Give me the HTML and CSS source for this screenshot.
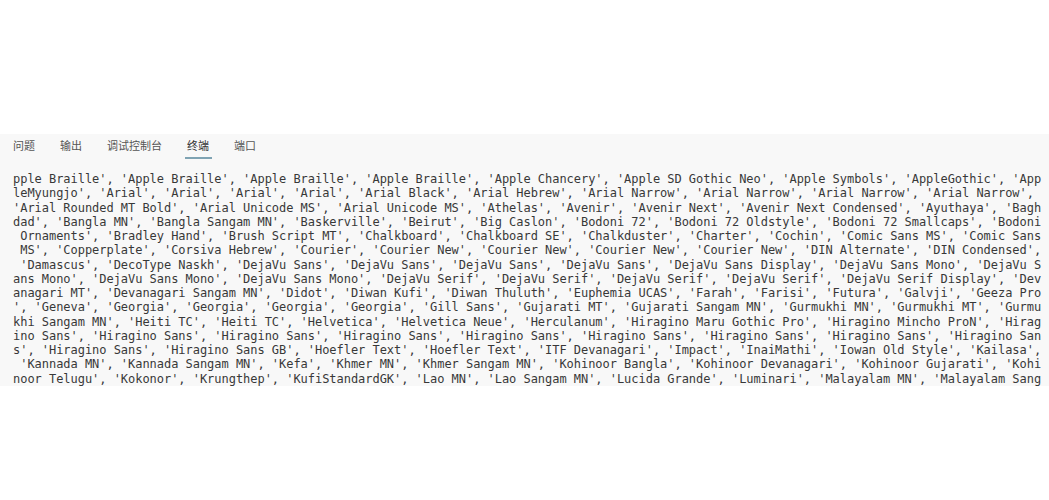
FILE: index.html
```html
<!DOCTYPE html>
<html lang="zh">
<head>
<meta charset="utf-8">
<title>终端</title>
<link rel="stylesheet" href="styles.css">
</head>
<body>
<div class="top"></div>
<section class="panel">
  <nav class="tabs">
    <span class="tab">问题</span>
    <span class="tab">输出</span>
    <span class="tab">调试控制台</span>
    <span class="tab active">终端</span>
    <span class="tab">端口</span>
  </nav>
  <div class="terminal">
<div class="line">pple Braille', 'Apple Braille', 'Apple Braille', 'Apple Braille', 'Apple Chancery', 'Apple SD Gothic Neo', 'Apple Symbols', 'AppleGothic', 'App</div>
<div class="line">leMyungjo', 'Arial', 'Arial', 'Arial', 'Arial', 'Arial Black', 'Arial Hebrew', 'Arial Narrow', 'Arial Narrow', 'Arial Narrow', 'Arial Narrow', </div>
<div class="line">'Arial Rounded MT Bold', 'Arial Unicode MS', 'Arial Unicode MS', 'Athelas', 'Avenir', 'Avenir Next', 'Avenir Next Condensed', 'Ayuthaya', 'Bagh</div>
<div class="line">dad', 'Bangla MN', 'Bangla Sangam MN', 'Baskerville', 'Beirut', 'Big Caslon', 'Bodoni 72', 'Bodoni 72 Oldstyle', 'Bodoni 72 Smallcaps', 'Bodoni</div>
<div class="line"> Ornaments', 'Bradley Hand', 'Brush Script MT', 'Chalkboard', 'Chalkboard SE', 'Chalkduster', 'Charter', 'Cochin', 'Comic Sans MS', 'Comic Sans</div>
<div class="line"> MS', 'Copperplate', 'Corsiva Hebrew', 'Courier', 'Courier New', 'Courier New', 'Courier New', 'Courier New', 'DIN Alternate', 'DIN Condensed',</div>
<div class="line"> 'Damascus', 'DecoType Naskh', 'DejaVu Sans', 'DejaVu Sans', 'DejaVu Sans', 'DejaVu Sans', 'DejaVu Sans Display', 'DejaVu Sans Mono', 'DejaVu S</div>
<div class="line">ans Mono', 'DejaVu Sans Mono', 'DejaVu Sans Mono', 'DejaVu Serif', 'DejaVu Serif', 'DejaVu Serif', 'DejaVu Serif', 'DejaVu Serif Display', 'Dev</div>
<div class="line">anagari MT', 'Devanagari Sangam MN', 'Didot', 'Diwan Kufi', 'Diwan Thuluth', 'Euphemia UCAS', 'Farah', 'Farisi', 'Futura', 'Galvji', 'Geeza Pro</div>
<div class="line">', 'Geneva', 'Georgia', 'Georgia', 'Georgia', 'Georgia', 'Gill Sans', 'Gujarati MT', 'Gujarati Sangam MN', 'Gurmukhi MN', 'Gurmukhi MT', 'Gurmu</div>
<div class="line">khi Sangam MN', 'Heiti TC', 'Heiti TC', 'Helvetica', 'Helvetica Neue', 'Herculanum', 'Hiragino Maru Gothic Pro', 'Hiragino Mincho ProN', 'Hirag</div>
<div class="line">ino Sans', 'Hiragino Sans', 'Hiragino Sans', 'Hiragino Sans', 'Hiragino Sans', 'Hiragino Sans', 'Hiragino Sans', 'Hiragino Sans', 'Hiragino San</div>
<div class="line">s', 'Hiragino Sans', 'Hiragino Sans GB', 'Hoefler Text', 'Hoefler Text', 'ITF Devanagari', 'Impact', 'InaiMathi', 'Iowan Old Style', 'Kailasa',</div>
<div class="line"> 'Kannada MN', 'Kannada Sangam MN', 'Kefa', 'Khmer MN', 'Khmer Sangam MN', 'Kohinoor Bangla', 'Kohinoor Devanagari', 'Kohinoor Gujarati', 'Kohi</div>
<div class="line">noor Telugu', 'Kokonor', 'Krungthep', 'KufiStandardGK', 'Lao MN', 'Lao Sangam MN', 'Lucida Grande', 'Luminari', 'Malayalam MN', 'Malayalam Sang</div>
  </div>
</section>
</body>
</html>
```

FILE: styles.css
```css
html, body {
  margin: 0;
  padding: 0;
  background: #ffffff;
}

.top {
  height: 134px;
}

.panel {
  background: #f8f8f8;
  height: 252px;
  overflow: hidden;
}

.tabs {
  display: flex;
  gap: 25px;
  padding-left: 13px;
  height: 25px;
}

.tab {
  position: relative;
  font-family: "Noto Sans CJK SC", "Noto Sans", sans-serif;
  font-size: 11px;
  line-height: 23px;
  color: #555555;
}

.tab.active {
  color: #333333;
}

.tab.active::after {
  content: "";
  position: absolute;
  left: -2px;
  right: -3px;
  top: 23px;
  height: 2px;
  background: #7fa3b3;
}

.terminal {
  padding: 13px 0 0 13px;
  font-family: "DejaVu Sans Mono", monospace;
  font-size: 12px;
  letter-spacing: -0.035px;
  line-height: 14.25px;
  color: #383838;
}

.line {
  white-space: pre;
}
```
